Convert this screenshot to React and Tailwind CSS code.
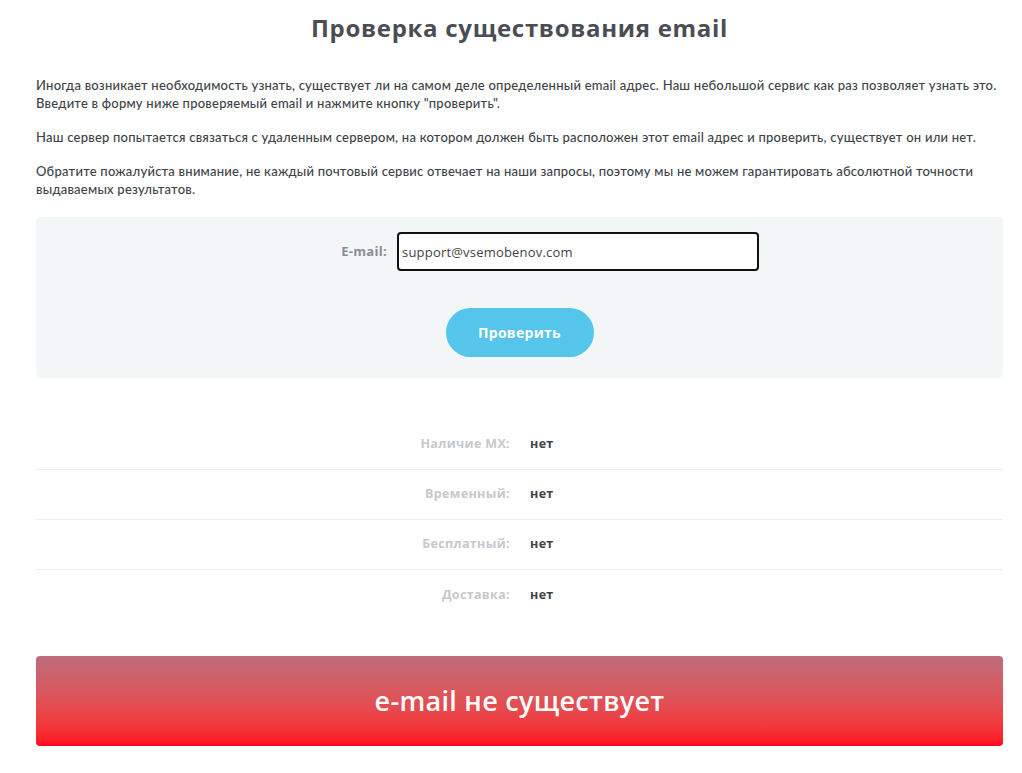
const rows = [
  { label: 'Наличие MX:', value: 'нет' },
  { label: 'Временный:', value: 'нет' },
  { label: 'Бесплатный:', value: 'нет' },
  { label: 'Доставка:', value: 'нет' },
];

export default function App() {
  return (
    <div className="min-h-screen bg-white font-['Lato','Open_Sans',sans-serif] text-[#3d4248]">
      <div className="ml-[36px] w-[967px] pt-[12px]">
        {/* Title */}
        <h1 className="text-center text-[24px] font-bold leading-[32px] text-[#4a4e54] font-['Open_Sans','DejaVu_Sans',sans-serif] tracking-[0.7px]">
          Проверка существования email
        </h1>

        {/* Intro */}
        <div className="mt-[32px] text-[13px] leading-[18px] flex flex-col gap-[16px] font-medium tracking-[0.23px]">
          <p>
            Иногда возникает необходимость узнать, существует ли на самом деле определенный email адрес. Наш небольшой сервис как раз позволяет узнать это.
            <br />
            Введите в форму ниже проверяемый email и нажмите кнопку "проверить".
          </p>
          <p>Наш сервер попытается связаться с удаленным сервером, на котором должен быть расположен этот email адрес и проверить, существует он или нет.</p>
          <p>
            Обратите пожалуйста внимание, не каждый почтовый сервис отвечает на наши запросы, поэтому мы не можем гарантировать абсолютной точности
            <br />
            выдаваемых результатов.
          </p>
        </div>

        {/* Form */}
        <div className="mt-[19px] bg-[#f3f6f7] rounded-[5px] h-[161px] flex flex-col items-center pt-[15px]">
          <div className="flex items-center w-full">
            <label className="w-[361px] pr-[10px] text-right text-[13px] font-bold text-[#8a8d91] font-['Open_Sans',sans-serif] tracking-[0.3px]">
              E-mail:
            </label>
            <input
              defaultValue="support@vsemobenov.com"
              className="w-[362px] h-[39px] border-2 border-[#111] rounded-[4px] bg-white px-[3px] text-[13px] text-[#444] font-['Open_Sans',sans-serif] tracking-[0.2px] outline-none"
            />
          </div>
          <button className="mt-[37px] w-[148px] h-[49px] rounded-full bg-[#56c5ec] text-white text-[14px] font-bold font-['Open_Sans',sans-serif] tracking-[0.3px]">
            Проверить
          </button>
        </div>

        {/* Results */}
        <div className="mt-[42px] font-['Open_Sans',sans-serif]">
          {rows.map((r, i) => (
            <div
              key={r.label}
              className={`flex items-center h-[50px] text-[12.5px] font-bold tracking-[0.35px] ${i < rows.length - 1 ? 'border-b border-[#ebedef]' : ''}`}
            >
              <div className="w-[474px] text-right text-[#c5c9ce]">{r.label}</div>
              <div className="ml-[20px] text-[#3f4348]">{r.value}</div>
            </div>
          ))}
        </div>

        {/* Verdict */}
        <div className="mt-[36px] h-[90px] rounded-[4px] bg-gradient-to-b from-[#be6c7b] to-[#ff041c] flex items-center justify-center">
          <span className="text-white text-[27px] font-['Open_Sans',sans-serif] font-semibold tracking-[0.3px]">
            e-mail не существует
          </span>
        </div>
      </div>
    </div>
  );
}
